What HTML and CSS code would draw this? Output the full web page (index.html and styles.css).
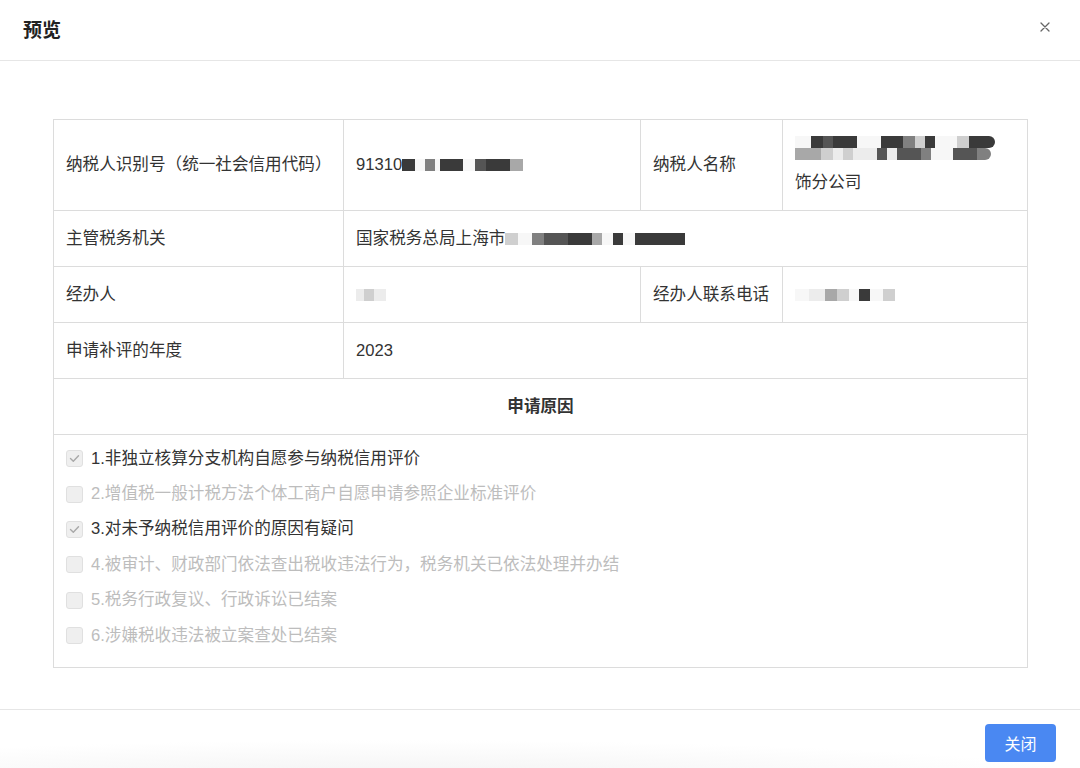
FILE: index.html
```html
<!DOCTYPE html>
<html lang="zh-CN">
<head>
<meta charset="utf-8">
<title>预览</title>
<link rel="stylesheet" href="styles.css">
</head>
<body>
<div class="modal">
  <header class="modal-header">
    <h1 class="modal-title">预览</h1>
    <button class="modal-close" aria-label="关闭">
      <svg width="10" height="10" viewBox="0 0 10 10"><path d="M1 1L9 9M9 1L1 9" stroke="#666" stroke-width="1.3" stroke-linecap="round"/></svg>
    </button>
  </header>
  <main class="modal-body">
    <table class="info">
      <colgroup>
        <col class="c1"><col class="c2"><col class="c3"><col class="c4">
      </colgroup>
      <tr class="r-tall">
        <td>纳税人识别号（统一社会信用代码）</td>
        <td>91310<span class="blur"><span class="px k1 w13"></span><span class="px k0 w10"></span><span class="px k3 w10"></span><span class="px k0 w5"></span><span class="px k1 w23"></span><span class="px k0 w12"></span><span class="px k2 w11"></span><span class="px k1 w12"></span><span class="px k1 w12"></span><span class="px k4 w13"></span></span></td>
        <td>纳税人名称</td>
        <td class="two-line">
          <div class="blur-block">
            <div class="blur-row"><span class="px k0 w16"></span><span class="px k1 w12"></span><span class="px k2 w10"></span><span class="px k1 w12"></span><span class="px k1 w12"></span><span class="px k0 w24"></span><span class="px k1 w12"></span><span class="px k1 w10"></span><span class="px k3 w12"></span><span class="px k5 w10"></span><span class="px k1 w10"></span><span class="px k0 w22"></span><span class="px k5 w12"></span><span class="px k1 w12"></span><span class="px k1 w14 round"></span></div>
            <div class="blur-row"><span class="px k4 w14"></span><span class="px k4 w12"></span><span class="px k5 w12"></span><span class="px k6 w10"></span><span class="px k5 w10"></span><span class="px k6 w24"></span><span class="px k2 w10"></span><span class="px k6 w10"></span><span class="px k2 w12"></span><span class="px k2 w12"></span><span class="px k3 w10"></span><span class="px k0 w22"></span><span class="px k2 w12"></span><span class="px k2 w12"></span><span class="px k3 w14 round"></span></div>
          </div>
          <div class="line2">饰分公司</div>
        </td>
      </tr>
      <tr>
        <td>主管税务机关</td>
        <td colspan="3">国家税务总局上海市<span class="blur"><span class="px k5 w13"></span><span class="px k0 w14"></span><span class="px k3 w12"></span><span class="px k2 w12"></span><span class="px k2 w12"></span><span class="px k1 w12"></span><span class="px k1 w12"></span><span class="px k4 w10"></span><span class="px k0 w11"></span><span class="px k1 w10"></span><span class="px k0 w12"></span><span class="px k1 w50"></span></span></td>
      </tr>
      <tr>
        <td>经办人</td>
        <td><span class="blur"><span class="px k6 w8"></span><span class="px k5 w10"></span><span class="px k6 w12"></span></span></td>
        <td>经办人联系电话</td>
        <td><span class="blur"><span class="px k0 w14"></span><span class="px k6 w16"></span><span class="px k4 w12"></span><span class="px k5 w12"></span><span class="px k0 w10"></span><span class="px k1 w11"></span><span class="px k0 w13"></span><span class="px k5 w12"></span></span></td>
      </tr>
      <tr>
        <td>申请补评的年度</td>
        <td colspan="3">2023</td>
      </tr>
      <tr>
        <td colspan="4" class="section">申请原因</td>
      </tr>
      <tr>
        <td colspan="4" class="reasons">
          <ul class="checks">
            <li class="checked"><span class="box"><svg width="11" height="9" viewBox="0 0 11 9"><path d="M1.5 4.5L4.3 7.2L9.5 1.8" fill="none" stroke="#a8a8a8" stroke-width="1.4" stroke-linecap="round" stroke-linejoin="round"/></svg></span>1.非独立核算分支机构自愿参与纳税信用评价</li>
            <li><span class="box"></span>2.增值税一般计税方法个体工商户自愿申请参照企业标准评价</li>
            <li class="checked"><span class="box"><svg width="11" height="9" viewBox="0 0 11 9"><path d="M1.5 4.5L4.3 7.2L9.5 1.8" fill="none" stroke="#a8a8a8" stroke-width="1.4" stroke-linecap="round" stroke-linejoin="round"/></svg></span>3.对未予纳税信用评价的原因有疑问</li>
            <li><span class="box"></span>4.被审计、财政部门依法查出税收违法行为，税务机关已依法处理并办结</li>
            <li><span class="box"></span>5.税务行政复议、行政诉讼已结案</li>
            <li><span class="box"></span>6.涉嫌税收违法被立案查处已结案</li>
          </ul>
        </td>
      </tr>
    </table>
  </main>
  <footer class="modal-footer">
    <button class="btn-primary">关闭</button>
  </footer>
</div>
</body>
</html>
```

FILE: styles.css
```css
* { box-sizing: border-box; }
html, body { margin: 0; padding: 0; background: #fff; }
body {
  font-family: "Liberation Sans", "Noto Sans CJK SC", sans-serif;
  color: #333;
  width: 1080px;
  height: 768px;
  overflow: hidden;
}
.modal { display: flex; flex-direction: column; height: 768px; }
.modal-header {
  height: 61px;
  border-bottom: 1px solid #e6e6e6;
  display: flex;
  align-items: center;
  justify-content: space-between;
  padding: 0 30px 0 23px;
}
.modal-title {
  margin: 0;
  font-size: 19px;
  font-weight: 700;
  color: #222;
  line-height: 24px;
  padding-top: 1px;
}
.modal-close {
  border: 0;
  background: none;
  padding: 0;
  width: 10px;
  height: 10px;
  display: flex;
  margin-top: -6px;
}
.modal-body {
  padding: 58px 53px 0 53px;
  height: 648px;
}
.info {
  width: 974px;
  border-collapse: collapse;
  table-layout: fixed;
  font-size: 16.6px;
}
.c1 { width: 290px; }
.c2 { width: 297px; }
.c3 { width: 142px; }
.c4 { width: 245px; }
.info td {
  border: 1px solid #dcdcdc;
  padding: 0 12px;
  height: 56px;
  line-height: 24px;
  vertical-align: middle;
  color: #333;
  white-space: nowrap;
}
.info .r-tall td { height: 91px; }
.two-line { padding-top: 0; }
.blur-block { height: 35px; display: flex; flex-direction: column; justify-content: center; }
.line2 { line-height: 35px; height: 35px; }
.blur { display: inline-flex; vertical-align: -1px; height: 12px; }
.blur-row { display: flex; height: 12px; }
.px { display: inline-block; height: 12px; }
.round { border-radius: 0 7px 7px 0; }
.k0 { background: #f7f7f7; }
.k1 { background: #3a3a3a; }
.k2 { background: #555; }
.k3 { background: #808080; }
.k4 { background: #a8a8a8; }
.k5 { background: #cfcfcf; }
.k6 { background: #ececec; }
.w5 { width: 5px; } .w8 { width: 8px; } .w10 { width: 10px; } .w11 { width: 11px; }
.w12 { width: 12px; } .w13 { width: 13px; } .w14 { width: 14px; } .w16 { width: 16px; }
.w22 { width: 22px; } .w23 { width: 23px; } .w24 { width: 24px; } .w50 { width: 50px; }
.info td.section {
  text-align: center;
  font-weight: 700;
  color: #333;
}
.info td.reasons {
  height: auto;
  padding: 6px 12px 14px 12px;
}
.checks { list-style: none; margin: 0; padding: 0; }
.checks li {
  display: flex;
  align-items: center;
  height: 35.4px;
  color: #bdbdbd;
}
.checks li.checked { color: #333; }
.box {
  width: 17px;
  height: 17px;
  border: 1px solid #e0e0e0;
  background: #efefef;
  border-radius: 3px;
  margin-right: 8px;
  display: flex;
  align-items: center;
  justify-content: center;
  flex: none;
}
.modal-footer {
  border-top: 1px solid #e6e6e6;
  flex: 1;
  display: flex;
  justify-content: flex-end;
  align-items: flex-start;
  padding: 14px 24px 0 0;
  background: radial-gradient(ellipse 700px 40px at 400px 70px, #f2f2f2, #fff 100%);
}
.btn-primary {
  width: 71px;
  height: 38px;
  border: 0;
  border-radius: 4px;
  background: #4a88f2;
  color: #fff;
  font-family: "Liberation Sans", "Noto Sans CJK SC", sans-serif;
  font-size: 16px;
}
```
